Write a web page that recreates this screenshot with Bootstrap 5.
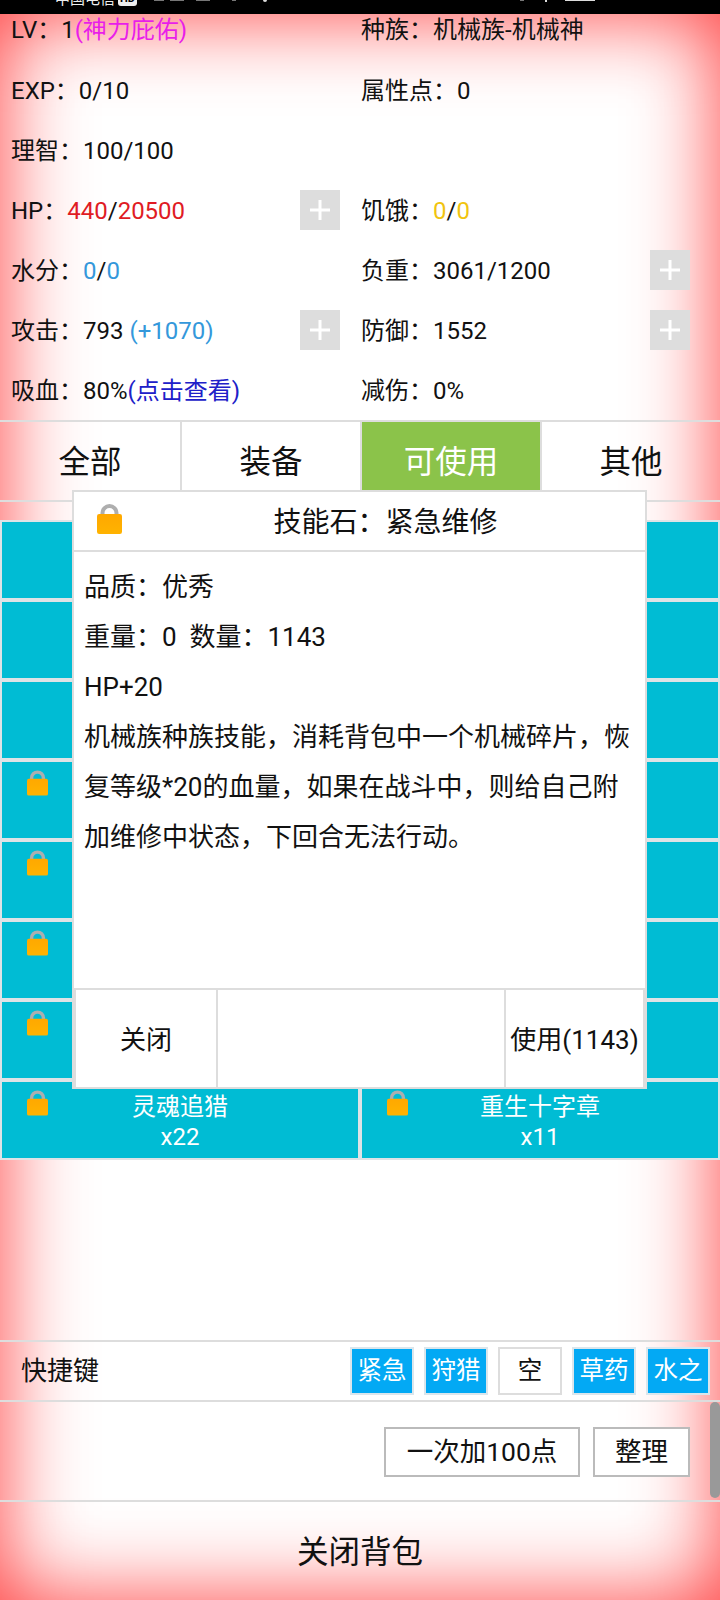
<!DOCTYPE html>
<html lang="zh-CN">
<head>
<meta charset="utf-8">
<title>背包</title>
<link href="https://cdn.jsdelivr.net/npm/bootstrap@5.3.0/dist/css/bootstrap.min.css" rel="stylesheet">
<style>
html,body{margin:0;background:#000;}
body{font-family:Roboto,"Noto Sans CJK SC",sans-serif;color:#111;font-size:24px;}
.phone{width:720px;height:1600px;overflow:hidden;}
.statusbar{height:14px;background:#000;color:#eee;overflow:hidden;font-size:15px;line-height:20px;flex:none;}
.statusline{margin-top:-11px;padding-left:55px;height:20px;}
.hdtag{background:#eee;color:#000;font-size:11px;line-height:14px;padding:0 2px;border-radius:3px;margin-left:3px;font-weight:700;}
.statusbits{position:absolute;left:0;top:0;}
.shell{height:1586px;background:#fff;box-shadow:inset 0 0 85px rgba(255,0,0,.78);}
.statrow{height:60px;}
.statrow.first{height:46px;padding-bottom:16px;}
.statleft{padding-left:11px;padding-right:20px;}
.statright{padding-left:1px;padding-right:30px;}
.stxt{display:block;padding-top:2px;}
.plusbtn{width:40px;height:40px;background:#ddd;}
.c-mag{color:#e91ee9;}.c-red{color:#e01b24;}.c-blue{color:#3498db;}.c-yel{color:#f1c40f;}.c-link{color:#2020c8;}
.tabbar{height:82px;border-top:2px solid #ddd;border-bottom:2px solid #ddd;font-size:31.5px;flex:none;}
.tabcell{width:180px;border-left:2px solid #ddd;}
.tabcell:first-child{border-left:0;}
.tabon{background:#8bc34a;color:#fff;background-clip:padding-box;}
.itemgrid{margin-top:18px;}
.itemcell{height:80px;border:2px solid #dde3e6;background:#00bcd4;color:#fff;font-size:24px;line-height:30px;padding-top:10px;}
.locksmall{position:absolute;left:25px;top:8px;width:21px;height:26px;}
.spacer{flex:1 1 auto;}
.keybar{height:60px;flex:none;border-top:2px solid #ddd;padding:0 10px 0 21px;font-size:26px;}
.keyset{gap:10px;margin-top:5px;}
.keybtn{width:64px;height:48px;padding:0;border:2px solid #dbe6ec;border-radius:0;background:#03a9f4;color:#fff;font-size:24.5px;line-height:1;}
.keybtn.blank{background:#fff;color:#111;border-color:#ddd;}
.actbar{height:100px;flex:none;border-top:2px solid #ddd;padding-right:30px;padding-top:25px;}
.actbtn{height:50px;padding:0;border:2px solid #bbb;border-radius:0;background:#fff;color:#111;font-size:26.5px;line-height:1;}
.actwide{width:196px;}
.actnarrow{width:97px;margin-left:13px;}
.closebar{flex:none;height:100px;border-top:2px solid #ddd;font-size:31.5px;padding-top:4px;}
.scrollthumb{position:absolute;left:710px;top:1402px;width:10px;height:96px;background:#999;border-radius:5px;}
.dlg{position:absolute;left:72px;top:490px;width:575px;height:599px;background:#fff;border:2px solid #ddd;border-bottom:0;}
.dlghead{height:60px;flex:none;border-bottom:2px solid #ddd;font-size:28px;}
.locksite{width:52px;padding-left:23px;}
.lockbig{width:25px;height:30px;display:block;margin-top:-5px;}
.dlgtitle{padding-top:4px;}
.dlgbody{flex:1 1 auto;padding:10px 11px 0 10px;line-height:50px;font-size:26px;}
.dlgfoot{height:101px;flex:none;font-size:26px;}
.footcell{border:2px solid #ddd;border-right:0;height:100%;padding-top:4px;}
.footleft{width:142px;}
.footmid{width:288px;}
.footright{width:141px;border-right:2px solid #ddd;white-space:nowrap;}
</style>
</head>
<body>
<div class="phone position-relative d-flex flex-column">
  <div class="statusbar position-relative">
    <div class="statusline d-flex align-items-center"><span>中国电信</span><span class="hdtag">HD</span></div>
    <svg class="statusbits" width="720" height="14" viewBox="0 0 720 14"><g fill="#777"><rect x="154" y="0" width="10" height="1"/><rect x="170" y="0" width="14" height="1"/><rect x="196" y="0" width="14" height="1"/><rect x="232" y="0" width="4" height="1"/><rect x="520" y="0" width="4" height="1"/></g><g fill="#ddd"><circle cx="265" cy="0" r="2"/><rect x="545" y="0" width="2" height="2"/><rect x="565" y="0" width="30" height="1"/></g></svg>
  </div>
  <div class="shell d-flex flex-column">
    <div class="row g-0 statrow first flex-nowrap">
      <div class="col-6 statleft d-flex align-items-center"><span class="stxt">LV：1<span class="c-mag">(神力庇佑)</span></span></div>
      <div class="col-6 statright d-flex align-items-center"><span class="stxt">种族：机械族-机械神</span></div>
    </div>
    <div class="row g-0 statrow">
      <div class="col-6 statleft d-flex align-items-center"><span class="stxt">EXP：0/10</span></div>
      <div class="col-6 statright d-flex align-items-center"><span class="stxt">属性点：0</span></div>
    </div>
    <div class="row g-0 statrow">
      <div class="col-6 statleft d-flex align-items-center"><span class="stxt">理智：100/100</span></div>
      <div class="col-6 statright"></div>
    </div>
    <div class="row g-0 statrow">
      <div class="col-6 statleft d-flex align-items-center justify-content-between"><span class="stxt">HP：<span class="c-red">440</span>/<span class="c-red">20500</span></span>
        <div class="plusbtn"><svg width="40" height="40" viewBox="0 0 40 40"><path d="M10 20h20M20 10v20" stroke="#fff" stroke-width="3" fill="none"/></svg></div></div>
      <div class="col-6 statright d-flex align-items-center"><span class="stxt">饥饿：<span class="c-yel">0</span>/<span class="c-yel">0</span></span></div>
    </div>
    <div class="row g-0 statrow">
      <div class="col-6 statleft d-flex align-items-center"><span class="stxt">水分：<span class="c-blue">0</span>/<span class="c-blue">0</span></span></div>
      <div class="col-6 statright d-flex align-items-center justify-content-between"><span class="stxt">负重：3061/1200</span>
        <div class="plusbtn"><svg width="40" height="40" viewBox="0 0 40 40"><path d="M10 20h20M20 10v20" stroke="#fff" stroke-width="3" fill="none"/></svg></div></div>
    </div>
    <div class="row g-0 statrow">
      <div class="col-6 statleft d-flex align-items-center justify-content-between"><span class="stxt">攻击：793 <span class="c-blue">(+1070)</span></span>
        <div class="plusbtn"><svg width="40" height="40" viewBox="0 0 40 40"><path d="M10 20h20M20 10v20" stroke="#fff" stroke-width="3" fill="none"/></svg></div></div>
      <div class="col-6 statright d-flex align-items-center justify-content-between"><span class="stxt">防御：1552</span>
        <div class="plusbtn"><svg width="40" height="40" viewBox="0 0 40 40"><path d="M10 20h20M20 10v20" stroke="#fff" stroke-width="3" fill="none"/></svg></div></div>
    </div>
    <div class="row g-0 statrow">
      <div class="col-6 statleft d-flex align-items-center"><span class="stxt">吸血：80%<span class="c-link">(点击查看)</span></span></div>
      <div class="col-6 statright d-flex align-items-center"><span class="stxt">减伤：0%</span></div>
    </div>

    <div class="tabbar d-flex">
      <div class="tabcell d-flex align-items-center justify-content-center pt-1">全部</div>
      <div class="tabcell d-flex align-items-center justify-content-center pt-1">装备</div>
      <div class="tabcell tabon d-flex align-items-center justify-content-center pt-1">可使用</div>
      <div class="tabcell d-flex align-items-center justify-content-center pt-1">其他</div>
    </div>

    <div class="row g-0 itemgrid text-center">
      <div class="col-6"><div class="itemcell position-relative"></div></div>
      <div class="col-6"><div class="itemcell position-relative"></div></div>
      <div class="col-6"><div class="itemcell position-relative"></div></div>
      <div class="col-6"><div class="itemcell position-relative"></div></div>
      <div class="col-6"><div class="itemcell position-relative"></div></div>
      <div class="col-6"><div class="itemcell position-relative"></div></div>
      <div class="col-6"><div class="itemcell position-relative"><svg class="locksmall" viewBox="0 0 25 30"><use href="#lockshape"/></svg></div></div>
      <div class="col-6"><div class="itemcell position-relative"></div></div>
      <div class="col-6"><div class="itemcell position-relative"><svg class="locksmall" viewBox="0 0 25 30"><use href="#lockshape"/></svg></div></div>
      <div class="col-6"><div class="itemcell position-relative"></div></div>
      <div class="col-6"><div class="itemcell position-relative"><svg class="locksmall" viewBox="0 0 25 30"><use href="#lockshape"/></svg></div></div>
      <div class="col-6"><div class="itemcell position-relative"></div></div>
      <div class="col-6"><div class="itemcell position-relative"><svg class="locksmall" viewBox="0 0 25 30"><use href="#lockshape"/></svg></div></div>
      <div class="col-6"><div class="itemcell position-relative"></div></div>
      <div class="col-6"><div class="itemcell position-relative"><svg class="locksmall" viewBox="0 0 25 30"><use href="#lockshape"/></svg>灵魂追猎<br>x22</div></div>
      <div class="col-6"><div class="itemcell position-relative"><svg class="locksmall" viewBox="0 0 25 30"><use href="#lockshape"/></svg>重生十字章<br>x11</div></div>
    </div>

    <div class="spacer"></div>

    <div class="keybar d-flex justify-content-between">
      <div class="align-self-center">快捷键</div>
      <div class="d-flex align-items-start keyset">
        <button class="btn keybtn" type="button">紧急</button>
        <button class="btn keybtn" type="button">狩猎</button>
        <button class="btn keybtn blank" type="button">空</button>
        <button class="btn keybtn" type="button">草药</button>
        <button class="btn keybtn" type="button">水之</button>
      </div>
    </div>
    <div class="actbar d-flex justify-content-end align-items-start">
      <button class="btn actbtn actwide" type="button">一次加100点</button>
      <button class="btn actbtn actnarrow" type="button">整理</button>
    </div>
    <div class="closebar d-flex align-items-center justify-content-center">关闭背包</div>
  </div>

  <div class="scrollthumb"></div>

  <div class="dlg d-flex flex-column">
    <div class="dlghead d-flex align-items-center">
      <div class="locksite"><svg class="lockbig" viewBox="0 0 25 30"><use href="#lockshape"/></svg></div>
      <div class="flex-grow-1 text-center dlgtitle">技能石：紧急维修</div>
    </div>
    <div class="dlgbody">
      <div>品质：优秀</div>
      <div>重量：0&nbsp;&nbsp;数量：1143</div>
      <div>HP+20</div>
      <div>机械族种族技能，消耗背包中一个机械碎片，恢复等级*20的血量，如果在战斗中，则给自己附加维修中状态，下回合无法行动。</div>
    </div>
    <div class="dlgfoot d-flex">
      <div class="footcell footleft d-flex align-items-center justify-content-center">关闭</div>
      <div class="footcell footmid"></div>
      <div class="footcell footright d-flex align-items-center justify-content-center">使用(1143)</div>
    </div>
  </div>

  <svg width="0" height="0" class="position-absolute">
    <defs>
      <linearGradient id="lockfill" x1="0" y1="0" x2="0" y2="1"><stop offset="0" stop-color="#ffa800"/><stop offset="1" stop-color="#ffb300"/></linearGradient>
      <g id="lockshape">
        <path d="M5.5 12V9a7 7 0 0 1 14 0v3" fill="none" stroke="#aeaeae" stroke-width="4"/>
        <rect x="0" y="10" width="25" height="20" rx="2.2" fill="url(#lockfill)"/>
      </g>
    </defs>
  </svg>
</div>
<script src="https://cdn.jsdelivr.net/npm/bootstrap@5.3.0/dist/js/bootstrap.bundle.min.js"></script>
</body>
</html>
